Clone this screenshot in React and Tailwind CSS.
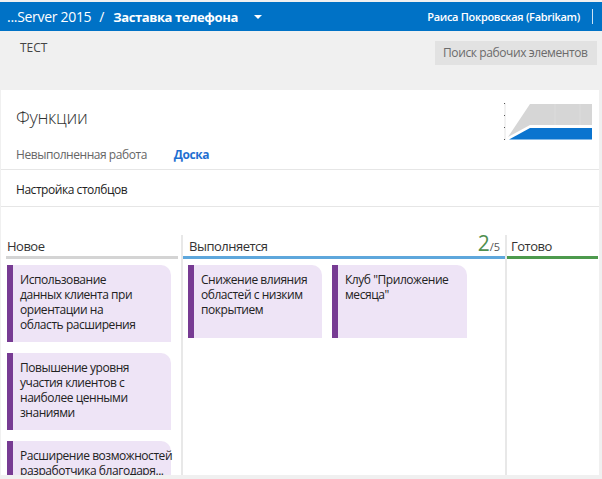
import React from "react";

const FONT = { fontFamily: '"Segoe UI", "Open Sans", "Noto Sans", sans-serif' };

function Card({ lines, className = "" }) {
  return (
    <div
      className={`flex bg-[#eee4f6] rounded-tr-[10px] min-h-[73px] ${className}`}
    >
      <div className="w-[6px] shrink-0 bg-[#773b93]" />
      <div className="pl-[7px] pr-[2px] pt-[7px] pb-[10px] text-[12px] leading-[15px] tracking-[-0.45px] text-[#222]">
        {lines.map((l, i) => (
          <div key={i} className="whitespace-nowrap">
            {l}
          </div>
        ))}
      </div>
    </div>
  );
}

function Chart() {
  return (
    <svg width="92" height="42" viewBox="0 0 92 42" className="block">
      <line x1="2" y1="2" x2="2" y2="39" stroke="#e4e4e4" strokeWidth="1" />
      <rect x="1" y="2" width="1" height="1" fill="#555" />
      <rect x="1" y="14" width="1" height="1" fill="#555" />
      <rect x="1" y="26" width="1" height="1" fill="#555" />
      <rect x="1" y="38" width="1" height="1" fill="#555" />
      <polygon points="5,36 27,3 89,3 89,24 27,24" fill="#d6d6d6" />
      <line x1="52" y1="3" x2="52" y2="24" stroke="#dcdcdc" />
      <line x1="77" y1="3" x2="77" y2="24" stroke="#dcdcdc" />
      <polygon points="6,38.5 27,27 89,27 89,38.5" fill="#0a74cf" />
    </svg>
  );
}

export default function App() {
  return (
    <div
      className="w-[602px] h-[479px] overflow-hidden bg-[#f0f0f0] flex flex-col pt-[2px]"
      style={FONT}
    >
      {/* Top blue bar */}
      <div className="h-[29px] shrink-0 bg-[#0072c6] flex items-center justify-between text-white">
        <div className="flex items-center pl-[7px] text-[14px] leading-[18px] tracking-[-0.3px]">
          <span>...Server 2015</span>
          <span className="ml-[8px] mr-[9px]">/</span>
          <span className="font-bold text-[13px] tracking-[-0.4px]">Заставка телефона</span>
          <svg width="8" height="5" viewBox="0 0 8 5" className="ml-[16px] mt-[1px]">
            <polygon points="0,0 8,0 4,4" fill="#ffffff" />
          </svg>
        </div>
        <div className="flex items-center pr-[9px]">
          <span className="text-[11px] font-semibold leading-[16px] tracking-[-0.3px]">
            Раиса Покровская (Fabrikam)
          </span>
          <div className="ml-[12px] w-px h-[15px] bg-white/80" />
        </div>
      </div>

      {/* Gray header */}
      <div className="h-[59px] shrink-0 flex justify-between items-start">
        <div className="pl-[20px] pt-[9px] text-[12px] leading-[16px] text-[#444]">
          ТЕСТ
        </div>
        <div className="mt-[10px] mr-[5px] w-[162px] h-[24px] bg-[#e2e2e2] flex items-center pl-[8px] text-[12px] tracking-[-0.4px] text-[#6b6b6b] whitespace-nowrap overflow-hidden">
          Поиск рабочих элементов
        </div>
      </div>

      {/* White content */}
      <div className="flex-1 min-h-0 bg-white ml-[1px] mr-[3px] mb-[4px] flex flex-col overflow-hidden">
        <div className="h-[54px] shrink-0 flex justify-between items-start">
          <div className="pl-[15px] pt-[15px] text-[18px] leading-[24px] font-light text-[#333] tracking-[-0.3px]">
            Функции
          </div>
          <div className="mt-[11px] mr-[4px]">
            <Chart />
          </div>
        </div>

        <div className="h-[26px] shrink-0 flex items-start pl-[15px] pt-[3px] border-b border-[#e6e6e6] text-[12px] leading-[16px] tracking-[-0.45px]">
          <span className="text-[#666]">Невыполненная работа</span>
          <span className="ml-[27px] font-bold text-[#1f6fd1]">Доска</span>
        </div>

        <div className="h-[37px] shrink-0 pl-[15px] pt-[12px] border-b border-[#e6e6e6] text-[12px] leading-[16px] tracking-[-0.45px] text-[#222]">
          Настройка столбцов
        </div>

        {/* Board */}
        <div className="flex-1 min-h-0 flex pt-[28px]">
          {/* Column 1 */}
          <div className="w-[180px] shrink-0 flex flex-col">
            <div className="ml-[5px] mr-[3px] pl-[1px] pt-[3px] pb-[2px] border-b-[3px] border-[#d4d4d4] text-[13px] leading-[16px] tracking-[-0.5px] text-[#333]">
              Новое
            </div>
            <div className="flex flex-col gap-[11px] pt-[6px] pl-[6px]">
              <Card
                className="w-[164px]"
                lines={[
                  "Использование",
                  "данных клиента при",
                  "ориентации на",
                  "область расширения",
                ]}
              />
              <Card
                className="w-[164px]"
                lines={[
                  "Повышение уровня",
                  "участия клиентов с",
                  "наиболее ценными",
                  "знаниями",
                ]}
              />
              <Card
                className="w-[164px]"
                lines={["Расширение возможностей", "разработчика благодаря..."]}
              />
            </div>
          </div>
          <div className="w-[2px] shrink-0 bg-[#e8e8e8]" />

          {/* Column 2 */}
          <div className="w-[322px] shrink-0 flex flex-col">
            <div className="flex items-end justify-between pl-[6px] pr-[5px] pb-[2px] border-b-[3px] border-[#5ea7dc] h-[24px]">
              <span className="text-[13px] leading-[16px] tracking-[-0.5px] text-[#333]">
                Выполняется
              </span>
              <span className="flex items-baseline text-[#4f8f4f]">
                <span className="text-[21px] leading-[22px]">2</span>
                <span className="text-[11px] leading-[14px] text-[#555]">/5</span>
              </span>
            </div>
            <div className="flex items-start gap-[10px] pt-[6px] pl-[5px]">
              <Card
                className="w-[134px]"
                lines={["Снижение влияния", "областей с низким", "покрытием"]}
              />
              <Card
                className="w-[135px]"
                lines={['Клуб "Приложение', 'месяца"']}
              />
            </div>
          </div>
          <div className="w-[2px] shrink-0 bg-[#e8e8e8]" />

          {/* Column 3 */}
          <div className="flex-1 flex flex-col">
            <div className="pl-[4px] pt-[3px] pb-[2px] border-b-[3px] border-[#4d9a4d] mr-[1px] text-[13px] leading-[16px] tracking-[-0.5px] text-[#333]">
              Готово
            </div>
          </div>
        </div>
      </div>
    </div>
  );
}
